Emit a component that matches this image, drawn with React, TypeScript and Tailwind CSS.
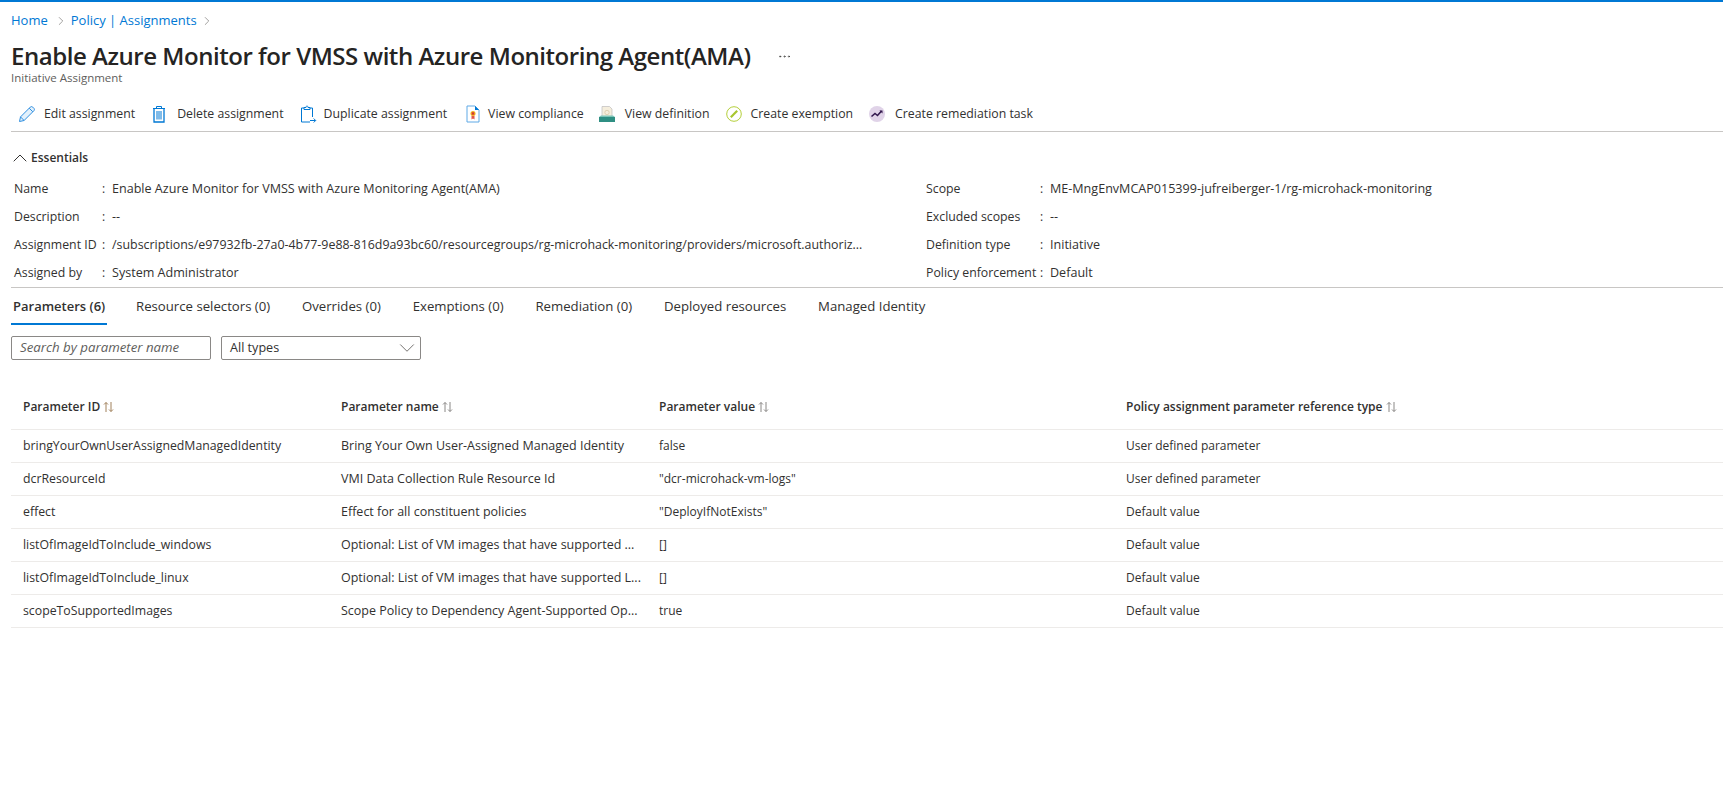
import React from 'react';
import { ChevronDown, ChevronRight, ChevronUp, MoreHorizontal } from 'lucide-react';

const font = "font-['Open_Sans','Noto_Sans',sans-serif]";

const PencilIcon = () => (
  <svg width="18" height="18" viewBox="0 0 18 18" fill="none" stroke="#2f8fe0" strokeWidth="1">
    <path d="M1.500 16.500l1-4.600L12.300 2.100c.7-.7 1.700-.7 2.400 0l1.200 1.200c.7.7.7 1.700 0 2.400L6.100 15.500l-4.600 1z" fill="#e3f1fc" />
    <path d="M2.500 11.900l3.600 3.600M11.200 3.200l3.600 3.600" />
  </svg>
);

const TrashIcon = () => (
  <svg width="16" height="18" viewBox="0 0 16 18" fill="none" stroke="#0078d4" strokeWidth="1">
    <path d="M2 3.500h12M5.500 3.500V1.500h5v2" />
    <path d="M3 3.500v13.500h10V3.500" strokeWidth="1.300" />
    <path d="M6 6v8.500M8 6v8.500M10 6v8.500" />
  </svg>
);

const DuplicateIcon = () => (
  <svg width="18" height="18" viewBox="0 0 18 18" fill="none" stroke="#0078d4" strokeWidth="1">
    <path d="M5 3H2.500v14H11M11 3h2.500v9" />
    <path d="M5 4.500V2.500h2C7 1.500 7.500 1 8 1s1 .5 1 1.500h2v2H5z" />
    <path d="M11 15.500h5.500M14.700 13.500l2 2-2 2" />
  </svg>
);

const ComplianceIcon = () => (
  <svg width="16" height="18" viewBox="0 0 16 18">
    <path d="M2 1h8l4 4v12H2z" fill="#fff" stroke="#5ea9e6" strokeWidth="1" />
    <path d="M10 1v4h4z" fill="#0078d4" />
    <circle cx="8" cy="8.500" r="2.500" fill="#f2b01e" />
    <rect x="6.800" y="7.300" width="2.400" height="2.400" fill="#d13438" />
    <path d="M6.500 11h3v3.500l-1.500-1-1.500 1z" fill="#e2574c" />
  </svg>
);

const DefinitionIcon = () => (
  <svg width="16" height="16" viewBox="0 0 16 16">
    <path d="M3 .5h7.500l2.500 2.500v8H3z" fill="#f5eedd" stroke="#bdbdbd" strokeWidth="0.700" />
    <circle cx="8" cy="6.500" r="2.200" fill="none" stroke="#d9c9a8" strokeWidth="0.800" />
    <path d="M0 11h16v5H0z" fill="#2f8f83" />
    <path d="M2 9.500h12l2 1.500H0z" fill="#7cc4b8" />
  </svg>
);

const ExemptionIcon = () => (
  <svg width="16" height="16" viewBox="0 0 16 16" fill="none">
    <circle cx="8" cy="8" r="7.300" stroke="#b4cf3a" strokeWidth="1" />
    <path d="M4.800 11.200L11.200 4.800" stroke="#a8c62e" strokeWidth="2.200" />
  </svg>
);

const RemediationIcon = () => (
  <svg width="16" height="16" viewBox="0 0 16 16" fill="none">
    <circle cx="8" cy="8" r="8" fill="#e0d3e8" />
    <path d="M2.500 10.500L6 7.500l2.500 2 4-4.500" stroke="#32174d" strokeWidth="1.600" />
    <path d="M10.500 4.500H13.500V7.500z" fill="#32174d" />
  </svg>
);

const SortIcon = ({ active }: { active?: boolean }) => (
  <svg width="11" height="12" viewBox="0 0 11 12" fill="none" stroke={active ? '#a0805a' : '#8a8886'} strokeWidth="1" className="ml-[3px]">
    <path d="M3 11V1.500M1 3.500l2-2 2 2" />
    <path d="M8 1v9.500M6 8.500l2 2 2-2" />
  </svg>
);

const toolbar = [
  { label: 'Edit assignment', icon: <PencilIcon />, cls: 'gap-[8px] mr-[16px]', box: 'w-[18px]' },
  { label: 'Delete assignment', icon: <TrashIcon />, cls: 'gap-[10px] mr-[15px]', box: 'w-[16px]' },
  { label: 'Duplicate assignment', icon: <DuplicateIcon />, cls: 'gap-[7px] mr-[18px]', box: 'w-[18px]' },
  { label: 'View compliance', icon: <ComplianceIcon />, cls: 'gap-[7px] mr-[15px]', box: 'w-[16px]' },
  { label: 'View definition', icon: <DefinitionIcon />, cls: 'gap-[10px] mr-[16px]', box: 'w-[16px]' },
  { label: 'Create exemption', icon: <ExemptionIcon />, cls: 'gap-[9px] mr-[16px]', box: 'w-[16px]' },
  { label: 'Create remediation task', icon: <RemediationIcon />, cls: 'gap-[10px]', box: 'w-[16px]' },
];

const essentialsLeft = [
  ['Name', 'Enable Azure Monitor for VMSS with Azure Monitoring Agent(AMA)'],
  ['Description', '--'],
  ['Assignment ID', '/subscriptions/e97932fb-27a0-4b77-9e88-816d9a93bc60/resourcegroups/rg-microhack-monitoring/providers/microsoft.authoriz...'],
  ['Assigned by', 'System Administrator'],
];

const essentialsRight = [
  ['Scope', 'ME-MngEnvMCAP015399-jufreiberger-1/rg-microhack-monitoring'],
  ['Excluded scopes', '--'],
  ['Definition type', 'Initiative'],
  ['Policy enforcement', 'Default'],
];

const tabs = ['Parameters (6)', 'Resource selectors (0)', 'Overrides (0)', 'Exemptions (0)', 'Remediation (0)', 'Deployed resources', 'Managed Identity'];

const rows = [
  ['bringYourOwnUserAssignedManagedIdentity', 'Bring Your Own User-Assigned Managed Identity', 'false', 'User defined parameter'],
  ['dcrResourceId', 'VMI Data Collection Rule Resource Id', '"dcr-microhack-vm-logs"', 'User defined parameter'],
  ['effect', 'Effect for all constituent policies', '"DeployIfNotExists"', 'Default value'],
  ['listOfImageIdToInclude_windows', 'Optional: List of VM images that have supported ...', '[]', 'Default value'],
  ['listOfImageIdToInclude_linux', 'Optional: List of VM images that have supported L...', '[]', 'Default value'],
  ['scopeToSupportedImages', 'Scope Policy to Dependency Agent-Supported Op...', 'true', 'Default value'],
];

const columns = ['Parameter ID', 'Parameter name', 'Parameter value', 'Policy assignment parameter reference type'];
const cellText = ['text-[12.3px]', 'text-[12.5px]', 'text-[12px]', 'text-[12px]'];
const gridCols = 'grid grid-cols-[318px_318px_467px_1fr]';

const Essentials = ({ items, labelW }: { items: string[][]; labelW: string }) => (
  <div className="flex flex-col">
    {items.map(([k, v]) => (
      <div key={k} className="flex h-[28px] items-center whitespace-nowrap">
        <span className={`${labelW} text-[12.3px]`}>{k}</span>
        <span className="w-[10px]">:</span>
        <span className={k === 'Assignment ID' ? 'text-[12.4px]' : 'text-[12.57px]'}>{v}</span>
      </div>
    ))}
  </div>
);

export default function App() {
  return (
    <div className={`${font} h-[792px] w-full overflow-hidden bg-white text-[12px] text-[#323130] border-t-2 border-[#0078d4]`}>
      <div className="flex h-[36px] items-center pl-[11px] pt-[1px] text-[13px] text-[#0078d4]">
        <span>Home</span>
        <ChevronRight size={14} strokeWidth={1} className="ml-[6px] mr-[3px] text-[#605e5c]" />
        <span>Policy | Assignments</span>
        <ChevronRight size={14} strokeWidth={1} className="ml-[3px] text-[#605e5c]" />
      </div>
      <div className="flex h-[36px] items-center pl-[11px]">
        <h1 className="text-[24px] font-semibold tracking-[-0.46px] text-[#252423]">Enable Azure Monitor for VMSS with Azure Monitoring Agent(AMA)</h1>
        <MoreHorizontal size={15} strokeWidth={1} className="ml-[26px] text-[#323130]" />
      </div>
      <div className="-mt-[3px] pl-[11px] text-[11.5px] leading-[14px] text-[#605e5c]">Initiative Assignment</div>

      <div className="ml-[11px] mt-[11px] flex h-[36px] items-center border-b border-[#c8c6c4] pl-[7px] pt-[1px] text-[12.3px]">
        {toolbar.map((t) => (
          <div key={t.label} className={`flex items-center whitespace-nowrap ${t.cls}`}>
            <span className={`-mt-[1px] flex justify-center ${t.box}`}>{t.icon}</span>
            <span>{t.label}</span>
          </div>
        ))}
      </div>

      <div className="mt-[16px] flex h-[20px] items-center pl-[8px] font-semibold">
        <ChevronUp size={24} strokeWidth={1} className="-mr-[1px]" />
        <span>Essentials</span>
      </div>

      <div className="ml-[11px] mt-[7px] flex border-b border-[#c8c6c4] pl-[3px]">
        <div className="w-[912px]">
          <Essentials items={essentialsLeft} labelW="w-[88px]" />
        </div>
        <Essentials items={essentialsRight} labelW="w-[114px]" />
      </div>

      <div className="mx-[11px] mt-[6px] flex h-[32px] items-start gap-[31.8px] pt-[3px] text-[13.2px] leading-[18px]">
        {tabs.map((t, i) => (
          <div key={t} className={i === 0 ? '-mr-[3px] flex h-[28px] items-start border-b-2 border-[#0078d4] px-[2px] text-[13px] font-semibold' : 'flex h-[28px] items-start'}>
            {t}
          </div>
        ))}
      </div>

      <div className="mx-[11px] mt-[10px] flex gap-[10px]">
        <div className="flex h-[24px] w-[200px] items-center rounded-[2px] border border-[#8a8886] pl-[8px] text-[13.25px] italic text-[#605e5c]">Search by parameter name</div>
        <div className="flex h-[24px] w-[200px] items-center justify-between rounded-[2px] border border-[#8a8886] pl-[8px] text-[12.6px]">
          <span>All types</span>
          <ChevronDown size={26} strokeWidth={0.8} className="text-[#605e5c]" />
        </div>
      </div>

      <div className="ml-[11px] mt-[25px]">
        <div className={`${gridCols} h-[45px] items-center border-b border-[#edebe9] pb-[1px] font-semibold`}>
          {columns.map((c, i) => (
            <div key={c} className="flex items-center pl-[12px]">
              {c}
              <SortIcon active={i === 0} />
            </div>
          ))}
        </div>
        {rows.map((r) => (
          <div key={r[0]} className={`${gridCols} h-[33px] items-center border-b border-[#edebe9]`}>
            {r.map((c, i) => (
              <div key={i} className={`whitespace-nowrap pl-[12px] ${cellText[i]}`}>{c}</div>
            ))}
          </div>
        ))}
      </div>
    </div>
  );
}
